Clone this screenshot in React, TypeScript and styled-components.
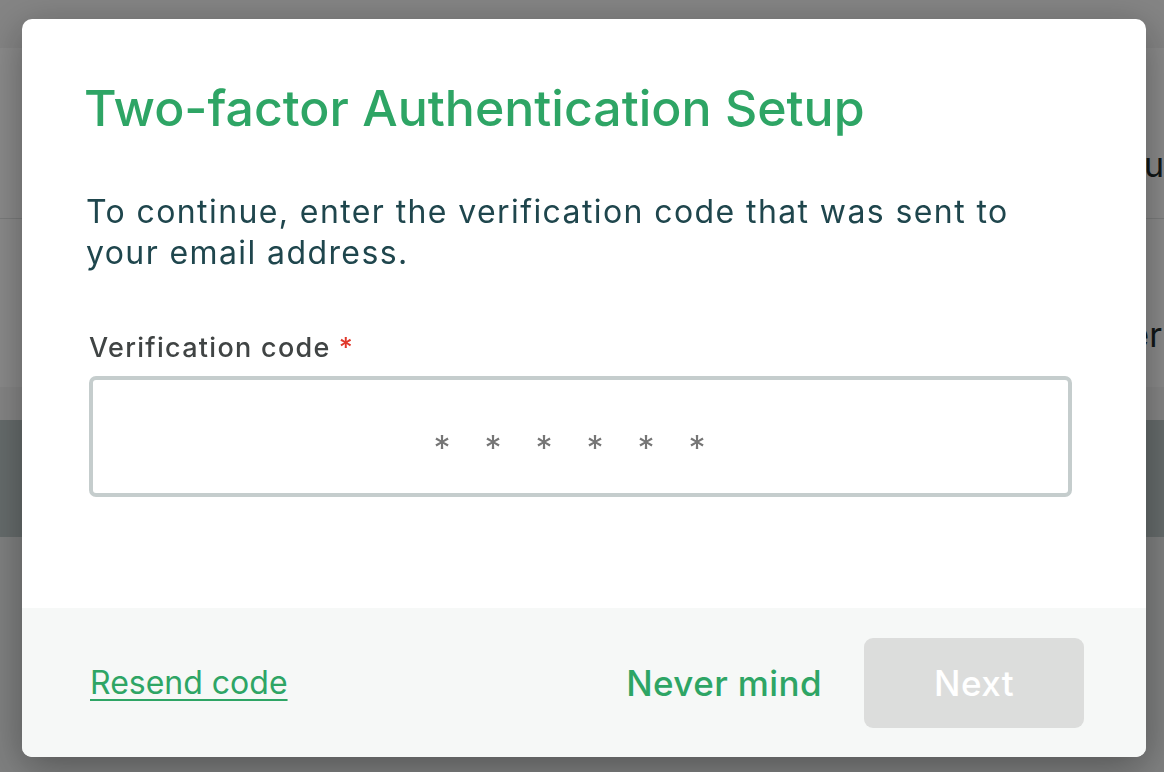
import React from "react";
import styled, { createGlobalStyle } from "styled-components";

const GlobalStyle = createGlobalStyle`
  html, body { margin: 0; padding: 0; }
  body {
    font-family: Inter, "Noto Sans", "Liberation Sans", sans-serif;
    width: 1164px;
    height: 772px;
    overflow: hidden;
  }
  * { box-sizing: border-box; }
`;

/* ---------- background page (dimmed behind the dialog) ---------- */
const Page = styled.div`
  width: 1164px;
  height: 772px;
  display: flex;
  flex-direction: column;
  background: #ebeded;
`;

const TopBar = styled.div`
  height: 48px;
  background: #f4f4f4;
`;

const Card = styled.div`
  background: #ffffff;
  display: flex;
  flex-direction: column;
`;

const CardRow = styled.div<{ $h: number; $divider?: boolean }>`
  height: ${(p) => p.$h}px;
  display: flex;
  align-items: center;
  justify-content: flex-end;
  padding-top: 62px;
  padding-right: ${(p) => (p.$divider ? 2 : 0)}px;
  border-top: ${(p) => (p.$divider ? "1px solid #e2e4e4" : "none")};
  font-size: 34px;
  color: #1e2a2a;
  white-space: nowrap;
  overflow: hidden;
`;

const Gap = styled.div`
  height: 33px;
  background: #f6f6f6;
`;

const Banner = styled.div`
  height: 117px;
  background: #bcc7c7;
`;

const Overlay = styled.div`
  position: fixed;
  inset: 0;
  background: rgba(0, 0, 0, 0.46);
  display: flex;
  align-items: flex-start;
  padding: 19px 0 0 22px;
`;

/* ---------- dialog ---------- */
const Modal = styled.div`
  width: 1124px;
  height: 738px;
  background: #ffffff;
  border-radius: 10px;
  overflow: hidden;
  display: flex;
  flex-direction: column;
  box-shadow: 0 10px 40px rgba(0, 0, 0, 0.35);
`;

const Body = styled.div`
  flex: 1;
  padding: 60px 74px 0 64px;
  display: flex;
  flex-direction: column;
`;

const Title = styled.h1`
  margin: 0 0 0 -2px;
  font-size: 50px;
  line-height: 58px;
  font-weight: 500;
  color: #2ea565;
`;

const Description = styled.p`
  margin: 54px 0 0;
  font-size: 32px;
  line-height: 41px;
  letter-spacing: 1.4px;
  font-weight: 400;
  color: #1f464d;
`;

const Field = styled.div`
  margin: 59px 0 0 3px;
  display: flex;
  flex-direction: column;
`;

const Label = styled.label`
  font-size: 27px;
  line-height: 32px;
  letter-spacing: 1.3px;
  font-weight: 500;
  color: #404444;
`;

const Required = styled.span`
  color: #e0382b;
  margin-left: 8px;
`;

const CodeInput = styled.input`
  margin-top: 12px;
  height: 121px;
  width: 983px;
  border: 4px solid #c5cdcd;
  border-radius: 7px;
  background: #ffffff;
  outline: none;
  text-align: center;
  font-family: Inter, "Noto Sans", sans-serif;
  font-size: 34px;
  letter-spacing: 34px;
  padding: 22px 0 0 12px;
  color: #333;
  &::placeholder {
    color: #767676;
  }
`;

const Footer = styled.div`
  height: 149px;
  background: #f6f8f7;
  display: flex;
  align-items: center;
  padding: 0 62px 0 68px;
`;

const LinkButton = styled.a`
  font-size: 32px;
  color: #2ea565;
  text-decoration: underline;
  text-underline-offset: 5px;
  text-decoration-thickness: 2px;
  cursor: pointer;
`;

const Spacer = styled.div`
  flex: 1;
`;

const TextButton = styled.button`
  border: none;
  background: none;
  padding: 0;
  font-family: Inter, "Noto Sans", sans-serif;
  font-size: 35px;
  font-weight: 500;
  letter-spacing: 0.4px;
  color: #2ea565;
  cursor: pointer;
`;

const PrimaryButton = styled.button<{ $disabled?: boolean }>`
  margin-left: 42px;
  width: 220px;
  height: 90px;
  border: none;
  border-radius: 9px;
  background: ${(p) => (p.$disabled ? "#dcdddc" : "#2ea565")};
  color: #ffffff;
  font-family: Inter, "Noto Sans", sans-serif;
  font-size: 35px;
  font-weight: 500;
  letter-spacing: 0.4px;
`;

export default function App() {
  return (
    <>
      <GlobalStyle />
      <Page>
        <TopBar />
        <Card>
          <CardRow $h={170}>Menu</CardRow>
          <CardRow $h={169} $divider>
            Member
          </CardRow>
        </Card>
        <Gap />
        <Banner />
      </Page>
      <Overlay>
        <Modal role="dialog" aria-labelledby="tfa-title">
          <Body>
            <Title id="tfa-title">Two-factor Authentication Setup</Title>
            <Description>
              To continue, enter the verification code that was sent to your
              email address.
            </Description>
            <Field>
              <Label htmlFor="code">
                Verification code<Required>*</Required>
              </Label>
              <CodeInput id="code" placeholder="******" />
            </Field>
          </Body>
          <Footer>
            <LinkButton>Resend code</LinkButton>
            <Spacer />
            <TextButton>Never mind</TextButton>
            <PrimaryButton $disabled disabled>
              Next
            </PrimaryButton>
          </Footer>
        </Modal>
      </Overlay>
    </>
  );
}
